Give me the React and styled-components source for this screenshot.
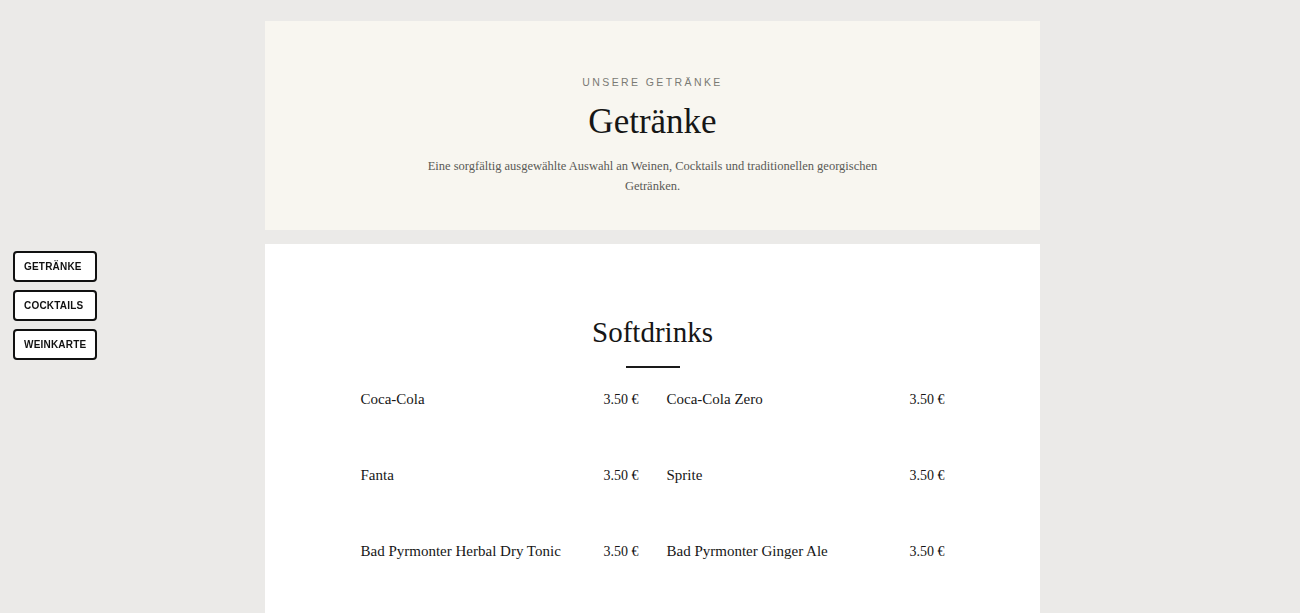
import styled, { createGlobalStyle } from 'styled-components';

const GlobalStyle = createGlobalStyle`
    html, body {
        margin: 0;
        padding: 0;
        background: #ebeae8;
    }
    body {
        font-family: "Liberation Serif", "DejaVu Serif", serif;
        color: #1a1a1a;
    }
`;

const serif = `"Liberation Serif", "DejaVu Serif", serif`;
const sans = `"Liberation Sans", Arial, sans-serif`;

const drinks = [
    { name: 'Coca-Cola', price: '3.50 €' },
    { name: 'Coca-Cola Zero', price: '3.50 €' },
    { name: 'Fanta', price: '3.50 €' },
    { name: 'Sprite', price: '3.50 €' },
    { name: 'Bad Pyrmonter Herbal Dry Tonic', price: '3.50 €' },
    { name: 'Bad Pyrmonter Ginger Ale', price: '3.50 €' },
];

const navItems = ['Getränke', 'Cocktails', 'Weinkarte'];

const Page = styled.div`
    min-height: 100vh;
    display: flex;
    flex-direction: column;
    align-items: center;
    padding: 21px 0 0 5px;
    gap: 14px;
`;

const Panel = styled.section`
    width: 775px;
    box-sizing: border-box;
    background: ${props => props.$tone === 'cream' ? '#f8f6f0' : '#ffffff'};
    display: flex;
    flex-direction: column;
    align-items: center;
`;

const Hero = styled(Panel)`
    padding: 54px 0 34px;
`;

const Eyebrow = styled.div`
    font-family: ${sans};
    font-size: 10.5px;
    letter-spacing: 2.4px;
    color: #7a7a74;
    text-transform: uppercase;
    line-height: 14px;
`;

const Title = styled.h1`
    margin: 11px 0 0;
    font-family: ${serif};
    font-weight: 400;
    font-size: 35px;
    line-height: 44px;
    color: #161616;
`;

const Lead = styled.p`
    margin: 12px 0 0;
    max-width: 450px;
    text-align: center;
    font-family: ${serif};
    font-size: 12.5px;
    line-height: 20px;
    color: #5a5a56;
`;

const Menu = styled(Panel)`
    padding: 70px 0 40px;
    min-height: 369px;
`;

const SectionTitle = styled.h2`
    margin: 0;
    font-family: ${serif};
    font-weight: 400;
    font-size: 29px;
    line-height: 36px;
    color: #161616;
`;

const Rule = styled.div`
    width: 54px;
    height: 2px;
    background: #1a1a1a;
    margin-top: 16px;
`;

const Grid = styled.ul`
    list-style: none;
    margin: 21px 0 0;
    padding: 0;
    width: 584px;
    display: grid;
    grid-template-columns: 1fr 1fr;
    column-gap: 28px;
    row-gap: 55px;
`;

const Item = styled.li`
    display: flex;
    justify-content: space-between;
    align-items: baseline;
    font-family: ${serif};
    font-size: 15px;
    line-height: 20px;
    color: #161616;
`;

const Price = styled.span`
    font-size: 14px;
`;

const SideNav = styled.nav`
    position: fixed;
    left: 13px;
    top: 251px;
    display: flex;
    flex-direction: column;
    gap: 8px;
`;

const NavButton = styled.button`
    width: 84px;
    height: 31px;
    box-sizing: border-box;
    border: 2px solid #111;
    border-radius: 4px;
    background: #ffffff;
    font-family: ${sans};
    font-weight: 700;
    font-size: 10px;
    letter-spacing: 0.2px;
    text-transform: uppercase;
    color: #111;
    text-align: left;
    padding: 0 9px;
    cursor: pointer;
`;

const App = () => {
    return (
        <>
            <GlobalStyle />
            <SideNav>
                {navItems.map(label => (
                    <NavButton key={label}>{label}</NavButton>
                ))}
            </SideNav>
            <Page>
                <Hero $tone="cream">
                    <Eyebrow>Unsere Getränke</Eyebrow>
                    <Title>Getränke</Title>
                    <Lead>
                        Eine sorgfältig ausgewählte Auswahl an Weinen, Cocktails und traditionellen georgischen Getränken.
                    </Lead>
                </Hero>
                <Menu>
                    <SectionTitle>Softdrinks</SectionTitle>
                    <Rule />
                    <Grid>
                        {drinks.map(d => (
                            <Item key={d.name}>
                                <span>{d.name}</span>
                                <Price>{d.price}</Price>
                            </Item>
                        ))}
                    </Grid>
                </Menu>
            </Page>
        </>
    );
};

export default App;
